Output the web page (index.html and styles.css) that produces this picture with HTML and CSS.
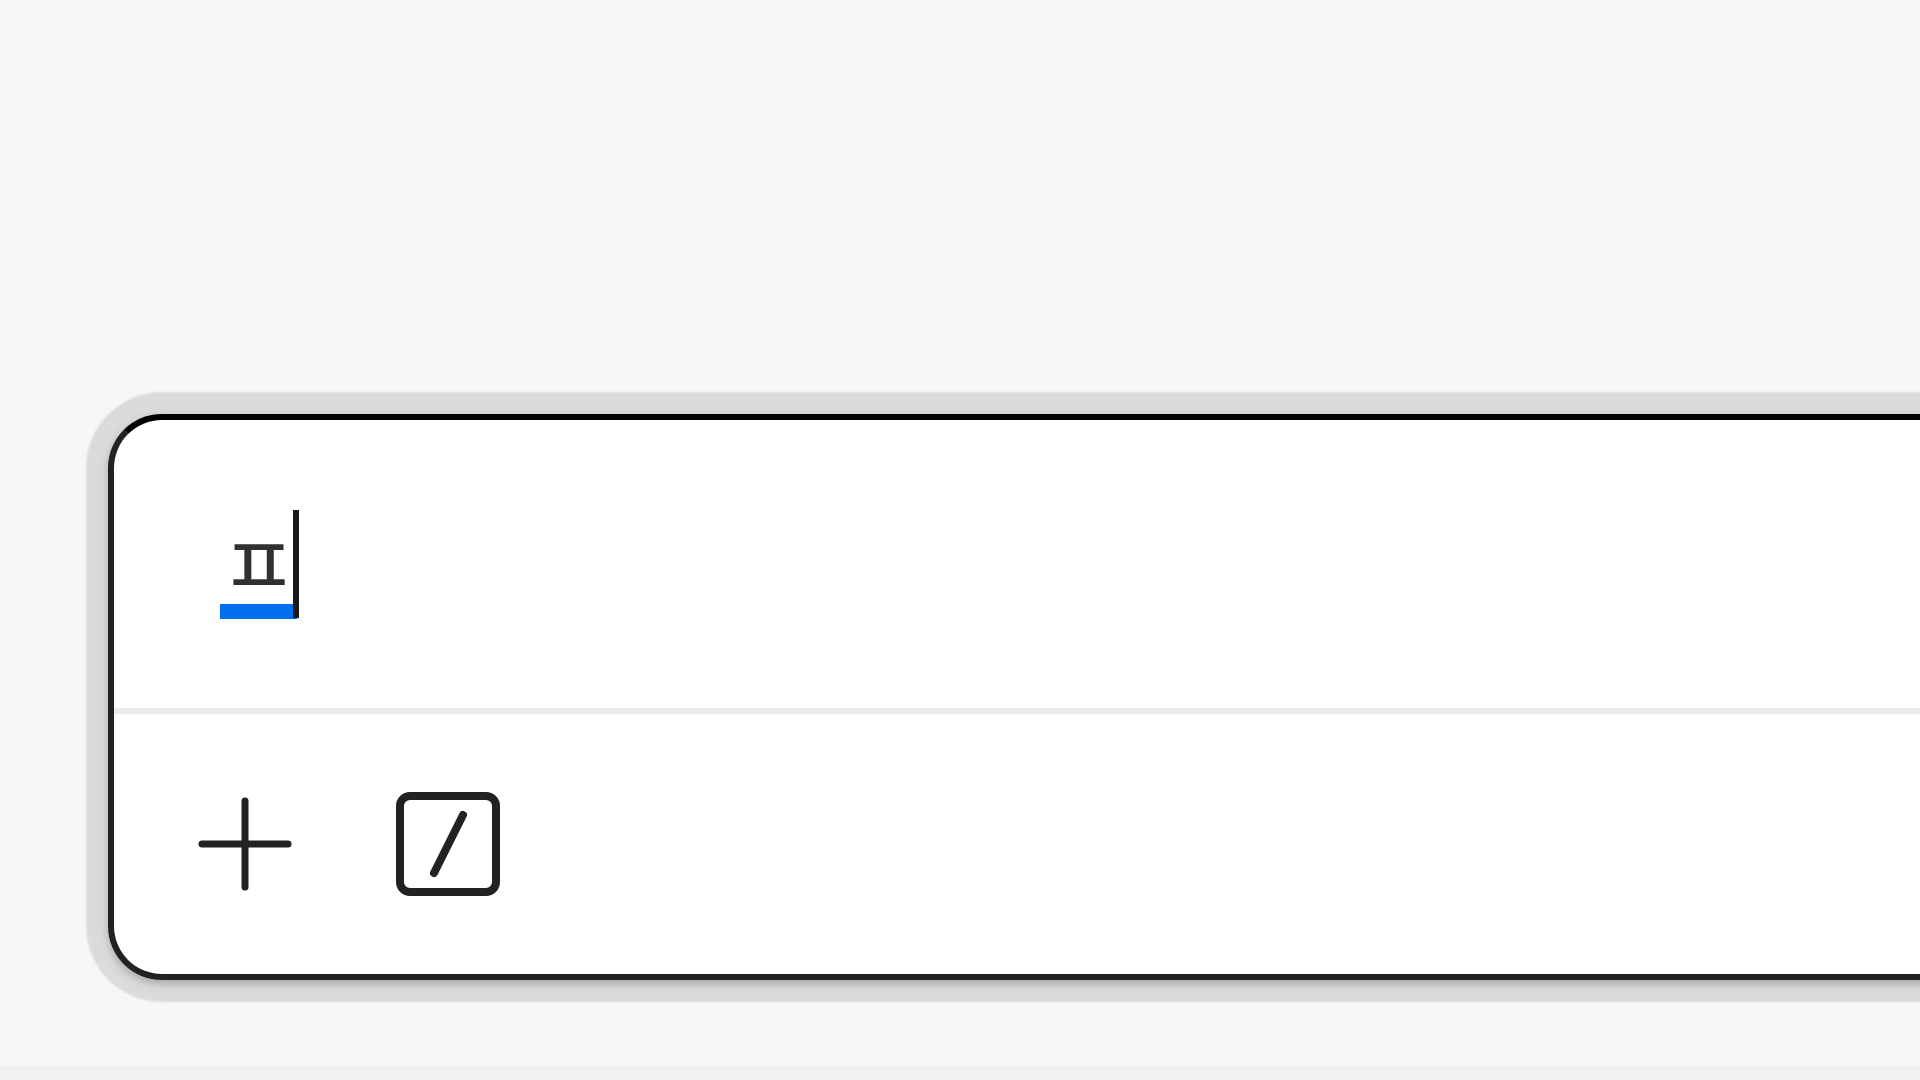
FILE: index.html
```html
<!DOCTYPE html>
<html lang="ko">
<head>
<meta charset="utf-8">
<meta name="viewport" content="width=device-width, initial-scale=1">
<title>Message</title>
<link rel="stylesheet" href="styles.css">
</head>
<body>
<main class="page">
  <form class="composer">
    <div class="field">
      <input class="field-input" type="text" value="ㅍ" aria-label="Message" autocomplete="off" spellcheck="false">
      <span class="caret"></span>
    </div>
    <div class="toolbar">
      <button class="tool" type="button" aria-label="Add">
        <svg class="icon" viewBox="0 0 108 108" fill="none" stroke="currentColor" stroke-width="7" stroke-linecap="round">
          <path d="M55 11V97M12 54H98"/>
        </svg>
      </button>
      <button class="tool" type="button" aria-label="Commands">
        <svg class="icon" viewBox="0 0 108 108" fill="none" stroke="currentColor" stroke-width="8" stroke-linecap="round">
          <rect x="6" y="6" width="96" height="96" rx="10"/>
          <path d="M69 25L40 83"/>
        </svg>
      </button>
    </div>
  </form>
</main>
</body>
</html>
```
FILE: styles.css
```css
* {
  box-sizing: border-box;
}

body {
  margin: 0;
  background: #f7f7f7;
  font-family: "Noto Sans CJK KR", "Noto Sans", sans-serif;
  color: #262626;
}

.page {
  display: flex;
  flex-direction: column;
  justify-content: flex-end;
  min-height: 100vh;
  padding: 0 0 86px 108px;
  border-bottom: 14px solid #f1f1f1;
  overflow: hidden;
}

.composer {
  margin-right: -80px;
  border: 6px solid #222;
  border-top-color: #000;
  border-radius: 54px;
  background: #fff;
  box-shadow: 0 4px 8px 0 #aaa, 0 0 2px 22px #dbdbdb;
}

.field {
  position: relative;
  padding: 68px 106px 76px;
  border-bottom: 6px solid #ebebeb;
}

.field-input {
  display: block;
  width: 100%;
  height: 144px;
  padding: 0;
  border: 0;
  outline: 0;
  background: transparent;
  color: #303030;
  font: inherit;
  font-size: 84px;
  line-height: 144px;
  text-decoration: underline #006ff0;
  text-decoration-thickness: 15px;
  text-decoration-skip-ink: none;
  text-underline-offset: 8px;
}

.caret {
  position: absolute;
  top: 90px;
  left: 179px;
  width: 6px;
  height: 108px;
  background: #1a1a1a;
}

.toolbar {
  display: flex;
  gap: 96px;
  padding: 76px;
}

.tool {
  width: 108px;
  height: 108px;
  padding: 0;
  border: 0;
  background: transparent;
  color: #222;
}

.icon {
  display: block;
  width: 100%;
  height: 100%;
}
```
